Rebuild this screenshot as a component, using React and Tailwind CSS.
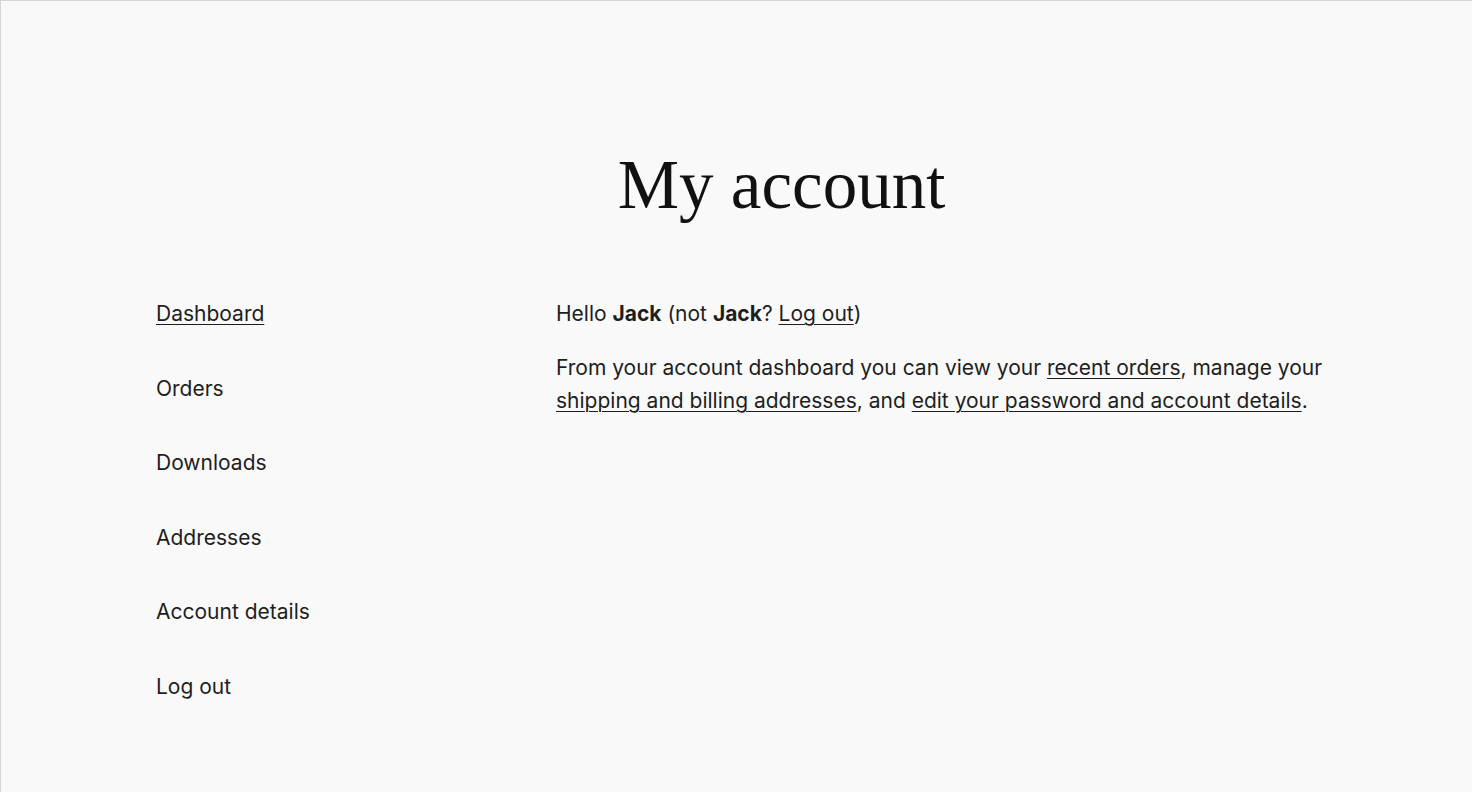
export default function App() {
  const nav = ["Dashboard", "Orders", "Downloads", "Addresses", "Account details", "Log out"];
  const link = "underline underline-offset-[3px] decoration-1";
  return (
    <div className="min-h-[792px] w-full bg-[#f9f9f9] border-t border-l border-[#d4d4d4] text-[#1e1e1e]" style={{ fontFamily: "Inter, 'Noto Sans', sans-serif" }}>
      <h1 className="pt-[139px] pl-[90px] text-center text-[69px] leading-[90px] text-[#111]" style={{ fontFamily: "'Liberation Serif', serif" }}>
        My account
      </h1>
      <div className="mt-[69px] flex pl-[155px] pr-[120px] text-[21px]">
        <nav className="w-[400px] shrink-0">
          <ul className="flex flex-col gap-[44.5px]">
            {nav.map((n, i) => (
              <li key={n} className="leading-[30px]">
                <a className={i === 0 ? link : ""}>{n}</a>
              </li>
            ))}
          </ul>
        </nav>
        <div className="flex-1">
          <p className="leading-[30px]">
            Hello <strong className="font-bold">Jack</strong> (not <strong className="font-bold">Jack</strong>?{" "}
            <a className={link}>Log out</a>)
          </p>
          <p className="mt-[22px] leading-[33px]">
            From your account dashboard you can view your{" "}
            <a className={link}>recent orders</a>, manage your{" "}
            <a className={link}>shipping and billing addresses</a>, and{" "}
            <a className={link}>edit your password and account details</a>.
          </p>
        </div>
      </div>
    </div>
  );
}
